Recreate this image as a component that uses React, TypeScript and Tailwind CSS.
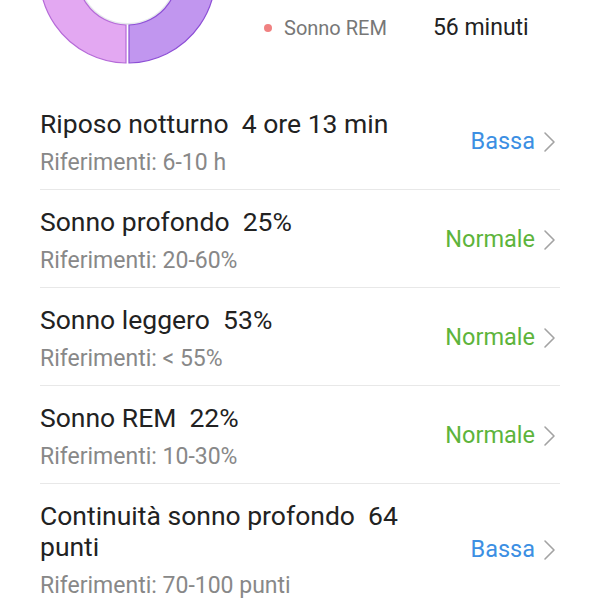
const rows = [
  {
    title: "Riposo notturno",
    value: "4 ore 13 min",
    ref: "Riferimenti: 6-10 h",
    status: "Bassa",
  },
  {
    title: "Sonno profondo",
    value: "25%",
    ref: "Riferimenti: 20-60%",
    status: "Normale",
  },
  {
    title: "Sonno leggero",
    value: "53%",
    ref: "Riferimenti: < 55%",
    status: "Normale",
  },
  {
    title: "Sonno REM",
    value: "22%",
    ref: "Riferimenti: 10-30%",
    status: "Normale",
  },
  {
    title: "Continuità sonno profondo",
    value: "64 punti",
    ref: "Riferimenti: 70-100 punti",
    status: "Bassa",
  },
];

function Donut() {
  return (
    <svg width="176" height="66" viewBox="0 0 176 66" className="shrink-0 ml-[40px]">
      <circle cx="87.5" cy="-25" r="49" fill="#ffffff" stroke="#e6e9ec" strokeWidth="2" />
      <path
        d="M 86 63 A 88 88 0 0 1 4.8 -55 L 40.5 -42.1 A 50 50 0 0 0 86 25 Z"
        fill="#e3a8f2"
        stroke="#b56ad8"
        strokeWidth="1.2"
      />
      <path
        d="M 89 63 A 88 88 0 0 0 170.2 -55 L 134.5 -42.1 A 50 50 0 0 1 89 25 Z"
        fill="#c196ef"
        stroke="#8d4fd6"
        strokeWidth="1.2"
      />
    </svg>
  );
}

function Chevron() {
  return (
    <svg width="14" height="24" viewBox="0 0 14 24" className="ml-[7px]">
      <polyline
        points="3,3 12,12 3,21"
        fill="none"
        stroke="#a3a3a3"
        strokeWidth="1.6"
        strokeLinecap="round"
        strokeLinejoin="round"
      />
    </svg>
  );
}

export default function App() {
  return (
    <div
      className="w-[600px] h-[600px] overflow-hidden bg-white"
      style={{ fontFamily: "Roboto, 'Noto Sans', sans-serif" }}
    >
      <div className="h-[92px] flex items-start">
        <Donut />
        <div className="flex items-center mt-[14px] ml-[48px]">
          <span className="size-[8px] rounded-full bg-[#f08181]" />
          <span className="ml-[12px] text-[20px] leading-[28px] text-[#777777]">
            Sonno REM
          </span>
          <span className="ml-[46px] text-[23px] leading-[28px] text-[#222222]">
            56 minuti
          </span>
        </div>
      </div>

      <div className="px-[40px]">
        {rows.map((row, i) => (
          <div
            key={i}
            className="flex items-center justify-between pr-[4px] pt-[16px] pb-[13px] border-b border-[#e8e8e8]"
          >
            <div className="flex flex-col max-w-[380px]">
              <span className="text-[26.5px] leading-[31px] text-[#222222] whitespace-pre-wrap">
                {row.title + "  " + row.value}
              </span>
              <span className="mt-[11px] text-[23px] leading-[26px] text-[#888888]">
                {row.ref}
              </span>
            </div>
            <div className="flex items-center">
              <span
                className={
                  row.status === "Bassa"
                    ? "text-[23.5px] text-[#3c8fe3]"
                    : "text-[23.5px] text-[#5db43b]"
                }
              >
                {row.status}
              </span>
              <Chevron />
            </div>
          </div>
        ))}
      </div>
    </div>
  );
}
